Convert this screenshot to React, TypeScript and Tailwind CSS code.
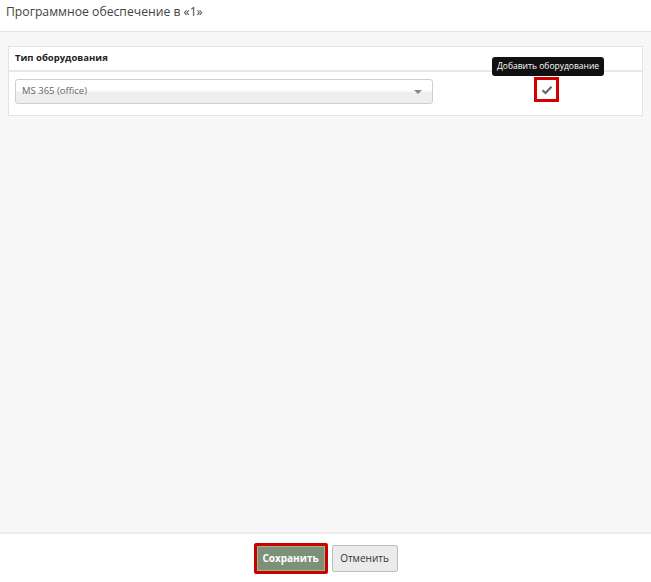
export default function App() {
  return (
    <div
      className="flex h-[582px] w-[651px] flex-col bg-white text-[#333]"
      style={{ fontFamily: '"Open Sans", "Noto Sans", sans-serif' }}
    >
      <div className="flex h-[32px] shrink-0 items-center border-b border-[#e5e5e5] px-[6px] pb-[6px]">
        <h1 className="text-[12.2px] text-[#444]">Программное обеспечение в «1»</h1>
      </div>

      <div className="flex-1 bg-[#f7f7f7] px-[8px] pt-[14px]">
        <div className="border border-[#e3e3e3] bg-white">
          <div className="flex h-[25px] items-center border-b-2 border-[#e8e8e8] px-[6px]">
            <span className="text-[9.5px] font-bold text-[#222]">Тип оборудования</span>
          </div>
          <div className="flex h-[43px] items-start pl-[6px] pt-[5px]">
            <div className="mt-[2px] flex h-[25px] w-[418px] items-center justify-between rounded-[3px] border border-[#cfcfcf] bg-[linear-gradient(#ffffff_0%,#ffffff_45%,#eeeeee_55%,#eeeeee_100%)] pl-[6px] pr-[10px]">
              <span className="text-[9.5px] text-[#666]">MS 365 (office)</span>
              <span className="h-0 w-0 border-x-[4px] border-t-[4px] border-x-transparent border-t-[#888]" />
            </div>
            <div className="relative ml-[101px]">
              <div className="absolute bottom-[26px] left-[-42px] whitespace-nowrap rounded-[3px] bg-[#111] px-[5px] py-[3px] text-[8.5px] text-white">
                Добавить оборудование
              </div>
              <button className="flex h-[25px] w-[25px] items-center justify-center border-[3px] border-[#d40000] bg-white">
                <svg width="12" height="10" viewBox="0 0 12 10">
                  <path d="M1.5 5.2 L4.5 8 L10.5 1.8" fill="none" stroke="#666" strokeWidth="2.2" />
                </svg>
              </button>
            </div>
          </div>
        </div>
      </div>

      <div className="flex h-[50px] shrink-0 items-center justify-center gap-[4px] border-t-2 border-[#ececec] bg-white">
        <button className="flex h-[31px] w-[74px] items-center justify-center rounded-[2px] border-[3px] border-[#cc0000] bg-[#7c9178] p-0">
          <span className="flex h-full w-full items-center justify-center border border-[#8fbf88] text-[10px] font-bold text-white">
            Сохранить
          </span>
        </button>
        <button className="h-[27px] w-[66px] rounded-[2px] border border-[#bdbdbd] bg-[#ebebeb] text-[10px] text-[#333]">
          Отменить
        </button>
      </div>
    </div>
  );
}
